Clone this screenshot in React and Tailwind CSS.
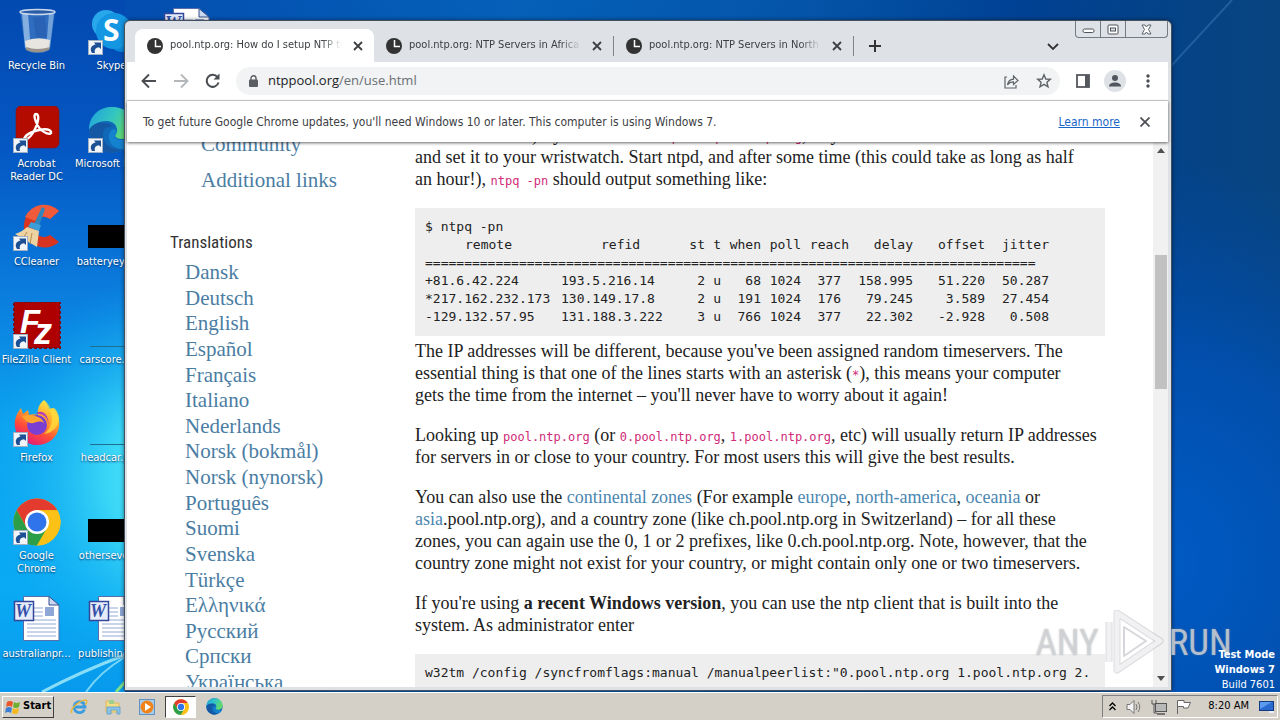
import React from "react";

const ui = "font-['DejaVu_Sans_Condensed','DejaVu_Sans',sans-serif]";

function Wallpaper() {
  return (
    <svg className="absolute inset-0 h-full w-full" viewBox="0 0 1280 692" preserveAspectRatio="none" aria-hidden="true">
      <defs>
        <linearGradient id="sky" x1="0" x2="1" y1="0" y2="0">
          <stop offset="0" stopColor="#0348ae" />
          <stop offset="0.4" stopColor="#0560b8" />
          <stop offset="0.62" stopColor="#0455aa" />
          <stop offset="0.8" stopColor="#004193" />
          <stop offset="1" stopColor="#08447f" />
        </linearGradient>
        <linearGradient id="left" x1="0" x2="0" y1="0" y2="1">
          <stop offset="0" stopColor="#0349b0" />
          <stop offset="0.22" stopColor="#0558c4" />
          <stop offset="0.42" stopColor="#0a7cdd" />
          <stop offset="0.62" stopColor="#0ca4f0" />
          <stop offset="0.85" stopColor="#0aaaf4" />
          <stop offset="1" stopColor="#079aec" />
        </linearGradient>
        <radialGradient id="glow" gradientUnits="userSpaceOnUse" cx="190" cy="480" r="210">
          <stop offset="0" stopColor="#5ff0ff" />
          <stop offset="0.4" stopColor="#41def8" stopOpacity="0.85" />
          <stop offset="1" stopColor="#0aa4f0" stopOpacity="0" />
        </radialGradient>
        <radialGradient id="low" gradientUnits="userSpaceOnUse" cx="1150" cy="560" r="400">
          <stop offset="0" stopColor="#005cc6" />
          <stop offset="0.5" stopColor="#0052b8" stopOpacity="0.8" />
          <stop offset="1" stopColor="#004ba8" stopOpacity="0" />
        </radialGradient>
      </defs>
      <rect width="1280" height="692" fill="url(#sky)" />
      <rect y="24" x="1100" width="180" height="668" fill="url(#low)" />
      <rect width="125" height="692" fill="url(#left)" />
      <rect width="125" height="692" fill="url(#glow)" />
      <path d="M1160 78 L1232 0" stroke="#3b78b4" strokeWidth="2" opacity="0.5" />
      <path d="M42 692 Q80 672 125 655" stroke="#a9eefa" strokeWidth="3" fill="none" opacity="0.8" />
      <path d="M86 692 Q100 672 125 657" stroke="#a9eefa" strokeWidth="2" fill="none" opacity="0.7" />
      <path d="M116 692 L125 682" stroke="#7fe08a" strokeWidth="3" />
    </svg>
  );
}

function Shortcut() {
  return (
    <g>
      <rect x="0.500" y="32.500" width="14" height="14" fill="#f1f5fa" stroke="#9fb0c4" />
      <path d="M4 45C1.500 41 3 37.500 7.500 36.500L6 34.500H13V41L11 39.300C8 39.500 6 41.500 7 45Z" fill="#1c4f93" />
    </g>
  );
}

function Art({ children, link = true }) {
  return (
    <svg width="48" height="48" viewBox="0 0 48 48" className="block" aria-hidden="true">
      {children}
      {link && <Shortcut />}
    </svg>
  );
}

function RecycleBin() {
  return (
    <Art link={false}>
      <path d="M7 3 L42 3 L37 40 Q36 45 25 45 Q14 45 12 40 Z" fill="#3f78c4" opacity="0.75" />
      <path d="M9 5 L15 5 L18 43 L12 40 Z" fill="#a7cdf0" opacity="0.7" />
      <path d="M36 5 L41 5 L37 40 L33 42 Z" fill="#8db9e6" opacity="0.7" />
      <path d="M20 10 L32 8 L34 28 L24 34 Z" fill="#2457a8" opacity="0.5" />
      <path d="M12 33 Q24 28 37 32 L36 41 Q25 46 13 41 Z" fill="#e8e4df" />
      <path d="M13 39 Q24 43 37 39 L36 42 Q24 47 13 42 Z" fill="#9a948c" />
      <ellipse cx="24.500" cy="4" rx="17.500" ry="2.500" fill="#2a5ca8" stroke="#c8d8ea" strokeWidth="1.500" />
    </Art>
  );
}

function Acrobat() {
  return (
    <Art>
      <rect x="3" y="0" width="43" height="42" rx="5" fill="#b30b00" stroke="#7c1a1a" strokeWidth="0.600" />
      <path
        d="M12 31c3-4 9-6 14-7 5-1 11-1 12 2 1 4-9 1-13-6-3-5-5-12-2-12 4 0 2 10-1 15-2 4-6 10-9 10-2 0-2-1-1-2z"
        fill="none" stroke="#fff" strokeWidth="2.400"
      />
    </Art>
  );
}

function CCleaner() {
  return (
    <Art>
      <path d="M46 7 A21 21 0 1 0 46 38 L37 31 A10 10 0 1 1 37 15 Z" fill="#d9341f" />
      <path d="M46 7 A21 21 0 0 0 12 13 L22 17 A10 10 0 0 1 37 15 Z" fill="#ef5a3a" />
      <path d="M29 3 L32 5 L26 22 L21 20 Z" fill="#2f86bd" />
      <path d="M18 18 L28 21 L26 27 L15 23 Z" fill="#3b9ed6" />
      <path d="M14 23 L26 27 L24 43 L2 30 Q9 28 14 23 Z" fill="#edd2a2" />
      <path d="M14 28 L10 34 M19 29 L17 40" stroke="#b9904e" />
    </Art>
  );
}

function FileZilla() {
  return (
    <Art>
      <rect x="1" y="0" width="46" height="46" fill="#ae0000" stroke="#7a0c14" strokeWidth="2" strokeDasharray="3 2" />
      <text x="7" y="31" fontSize="33" fontWeight="700" fontStyle="italic" fontFamily="Liberation Sans, sans-serif" fill="#fff">F</text>
      <text x="21" y="42" fontSize="36" fontWeight="700" fontStyle="italic" fontFamily="Liberation Sans, sans-serif" fill="#fff">z</text>
    </Art>
  );
}

function Firefox() {
  return (
    <Art>
      <defs>
        <linearGradient id="ff" x1="0.8" y1="0" x2="0.3" y2="1">
          <stop offset="0" stopColor="#fff14a" />
          <stop offset="0.4" stopColor="#ffa02a" />
          <stop offset="0.7" stopColor="#ff4a3a" />
          <stop offset="1" stopColor="#e0157f" />
        </linearGradient>
      </defs>
      <path d="M31 0c3 3 4 6 5 9l4-1c5 6 7 12 6 19-2 11-11 18-22 18S3 37 2 27c-1-8 2-14 6-19l2 6 5-4 1 5c3-1 6-1 9 0-1-6 1-11 6-15z" fill="url(#ff)" />
      <circle cx="24" cy="25" r="10" fill="#7a3fd2" />
      <path d="M9 16c5-2 12-1 16 1 5 2 6 6 6 6-5-4-9 1-14 0-4-1-6-4-8-7z" fill="#ffa52e" />
      <path d="M23 14c7-1 12 4 12 10 1-1 0-6-2-9-3-4-8-4-10-1z" fill="#b03ac0" />
      <path d="M31 0c3 3 4 6 5 9 6 9 2 20-5 25 9-1 15-8 15-16-1-7-4-10-6-10l-2 3C37 6 34 2 31 0z" fill="#ffdc3c" opacity="0.8" />
    </Art>
  );
}

function ChromeMark() {
  return (
    <g>
      <circle cx="24" cy="24" r="23.500" fill="#fbc116" />
      <path d="M3.700 12.200 A23.500 23.500 0 0 1 44.300 12.200 L24 12.200 L14 30 Z" fill="#e33b2e" />
      <path d="M3.700 12.200 A23.500 23.500 0 0 0 24 47.500 L34.200 30 L24 34 L13.800 30 Z" fill="#2b9e47" />
      <path d="M44.300 12.200 A23.500 23.500 0 0 1 24 47.500 L34.200 30 L24 12.200 Z" fill="#fbc116" />
      <circle cx="24" cy="24" r="12" fill="#fff" />
      <circle cx="24" cy="24" r="9.500" fill="#2f74ea" />
    </g>
  );
}

function EdgeMark({ id }) {
  return (
    <g>
      <defs>
        <linearGradient id={id} x1="0" x2="1" y1="0" y2="0.4">
          <stop offset="0" stopColor="#1f9fe0" />
          <stop offset="0.55" stopColor="#34c6c0" />
          <stop offset="1" stopColor="#63d96a" />
        </linearGradient>
      </defs>
      <circle cx="24" cy="24" r="23" fill="#1068b8" />
      <path d="M1 24 C1 9 12 1 24 1 C38 1 47 11 47 21 C47 29 41 33 34 33 C28 33 26 30 28 28 C31 24 28 15 19 15 C9 15 3 20 1 24 Z" fill={`url(#${id})`} />
      <path d="M15 28 C15 39 24 45 35 43 C29 47 22 48 15 45 C5 41 1 32 1 24 C4 18 11 16 17 17 C21 17 24 19 25 21 C19 20 15 23 15 28 Z" fill="#1458a4" />
      <path d="M28 28 C25 31 28 34 34 34 C39 34 43 33 45 31 C45 37 40 42 35 43 C25 43 20 36 21 29 C22 25 24 23 26 23 C29 24 29 26 28 28 Z" fill="#1582cf" />
    </g>
  );
}

function Skype() {
  return (
    <Art>
      <circle cx="18" cy="16" r="14" fill="#28a8ea" />
      <circle cx="34" cy="31" r="13" fill="#0a86d8" />
      <circle cx="26" cy="23" r="18" fill="#1496e2" />
      <text x="15" y="33" fontSize="30" fontWeight="700" fontFamily="Open Sans, sans-serif" fill="#fff">S</text>
    </Art>
  );
}

function WordDoc() {
  return (
    <Art link={false}>
      <path d="M10.500 .5 H36 L46 9 V44.500 H10.500 Z" fill="#fff" stroke="#5a6fa8" />
      <path d="M36 .5 V9 H46 Z" fill="#cbd8ef" stroke="#33508f" />
      <path d="M14 12H30M14 16H30M14 20H30M14 24H43M14 28H43M14 32H43M14 36H43M14 40H43" stroke="#93aad6" />
      <rect x="32" y="11" width="9" height="9" fill="#8ea7d6" />
      <rect x="1.500" y="5.500" width="19" height="19" fill="#e6ecfa" stroke="#33479a" strokeWidth="1.500" />
      <text x="2" y="21" fontSize="18" fontWeight="700" fontStyle="italic" fontFamily="Liberation Serif, serif" fill="#3450a8">W</text>
    </Art>
  );
}

function Thumb({ bar }) {
  return (
    <Art link={false}>
      {bar ? <rect x="0" y="21" width="48" height="23" fill="#000" /> : <rect x="2" y="44" width="46" height="1" fill="#1d6f92" />}
    </Art>
  );
}

function DesktopIcon({ label, children }) {
  return (
    <div className="flex h-[98px] w-[73px] flex-col items-center pt-2">
      {children}
      <span className={`mt-[3px] whitespace-pre text-center text-[11px] leading-[13px] text-white [text-shadow:0_1px_2px_#003060] ${ui}`}>{label}</span>
    </div>
  );
}

function Tab({ title, active }) {
  return (
    <div className={`flex h-[33px] w-[239px] shrink-0 items-center pl-3 pr-2 ${active ? "rounded-t-lg bg-white" : ""}`}>
      <svg width="16" height="16" viewBox="0 0 16 16" className="mr-[7px] shrink-0" aria-hidden="true">
        <circle cx="8" cy="8" r="8" fill="#333" />
        <path d="M8.500 2V8.500H14" stroke="#fff" strokeWidth="1.500" fill="none" />
      </svg>
      <span className="flex-1 overflow-hidden whitespace-nowrap text-[11px] text-[#3c4043] [mask-image:linear-gradient(to_right,#000_88%,transparent)]">{title}</span>
      <button aria-label="Close tab" className="ml-2 flex size-4 items-center justify-center">
        <svg width="10" height="10" viewBox="0 0 10 10"><path d="M1 1L9 9M9 1L1 9" stroke="#3c4043" strokeWidth="1.800" /></svg>
      </button>
    </div>
  );
}

const Sep = () => <div className="h-5 w-px shrink-0 bg-[#808489]" />;

function TabStrip() {
  return (
    <div className="flex h-[41px] items-end pl-2">
      <Tab active title="pool.ntp.org: How do I setup NTP to use" />
      <Tab title="pool.ntp.org: NTP Servers in Africa, africa" />
      <div className="flex h-[33px] items-center"><Sep /></div>
      <Tab title="pool.ntp.org: NTP Servers in North America" />
      <div className="flex h-[33px] flex-1 items-center">
        <Sep />
        <button aria-label="New tab" className="ml-[15px]">
          <svg width="12" height="12" viewBox="0 0 12 12"><path d="M6 0V12M0 6H12" stroke="#333" strokeWidth="2" /></svg>
        </button>
      </div>
      <div className="flex h-[41px] items-start">
        <button aria-label="Search tabs" className="mr-4 mt-[22px]">
          <svg width="12" height="8" viewBox="0 0 12 8"><path d="M1 1L6 6L11 1" stroke="#333" strokeWidth="1.800" fill="none" /></svg>
        </button>
        <div className="flex h-[17px] rounded-b border border-t-0 border-[#747a82]">
          <button aria-label="Minimize" className="flex w-[25px] items-center justify-center border-r border-[#747a82]">
            <svg width="13" height="7" viewBox="0 0 13 7"><rect x="1" y="3" width="11" height="3.500" rx="1.500" fill="#fff" stroke="#4e535b" /></svg>
          </button>
          <button aria-label="Maximize" className="flex w-[25px] items-center justify-center border-r border-[#747a82]">
            <svg width="13" height="11" viewBox="0 0 13 11"><rect x="1" y="1" width="10" height="9" rx="1" fill="#fff" stroke="#4e535b" /><rect x="3.500" y="4" width="5" height="3" fill="#dee1e6" stroke="#4e535b" /></svg>
          </button>
          <button aria-label="Close" className="flex w-[41px] items-center justify-center">
            <svg width="13" height="11" viewBox="0 0 13 11"><path d="M2 1H5L6.500 3L8 1H11L8.500 5.500L11 10H8L6.500 8L5 10H2L4.500 5.500Z" fill="#fff" stroke="#5d626a" /></svg>
          </button>
        </div>
      </div>
    </div>
  );
}

function Toolbar() {
  return (
    <div className="flex h-[39px] items-center border-b border-[#d5d7da] bg-white pl-[14px] pr-[18px]">
      <button aria-label="Back"><svg width="16" height="16" viewBox="0 0 16 16"><path d="M15 8H2M8 1.500L1.500 8L8 14.500" stroke="#4a4d51" strokeWidth="1.900" fill="none" /></svg></button>
      <button aria-label="Forward" className="ml-4"><svg width="16" height="16" viewBox="0 0 16 16"><path d="M1 8H14M8 1.500L14.500 8L8 14.500" stroke="#b5b8bb" strokeWidth="1.900" fill="none" /></svg></button>
      <button aria-label="Reload" className="ml-4"><svg width="16" height="16" viewBox="0 0 16 16"><path d="M13.500 9.500A6 6 0 1 1 12.500 4.200" stroke="#4a4d51" strokeWidth="2" fill="none" /><path d="M14.500 0.500V6.500H8.500Z" fill="#4a4d51" /></svg></button>
      <div className="ml-[15px] flex h-7 flex-1 items-center rounded-full bg-[#f1f3f4] pl-[13px] pr-2">
        <svg width="9" height="12" viewBox="0 0 9 12" className="mr-[10px] shrink-0"><rect y="4.500" width="9" height="7.500" rx="1" fill="#5b5e62" /><path d="M2 5V3.200a2.500 2.500 0 0 1 5 0V5" stroke="#5b5e62" strokeWidth="1.400" fill="none" /></svg>
        <div className="flex-1 whitespace-nowrap font-['Open_Sans',sans-serif] text-[13px] text-[#202124]">ntppool.org<span className="text-[#6a6e73]">/en/use.html</span></div>
        <button aria-label="Share" className="mr-[17px]">
          <svg width="15" height="15" viewBox="0 0 15 15"><path d="M3 3H1V14H12V11M3.500 11C4 7.500 6 5.500 9.500 5.200V2L14 6.500L9.500 10.500V7.800C7 7.800 5 8.500 3.500 11Z" stroke="#5f6368" strokeWidth="1.200" fill="none" /></svg>
        </button>
        <button aria-label="Bookmark">
          <svg width="16" height="16" viewBox="0 0 16 16"><path d="M8 1.800L9.800 6L14.300 6.400L10.900 9.300L12 13.800L8 11.400L4 13.800L5.100 9.300L1.700 6.400L6.200 6Z" stroke="#5f6368" strokeWidth="1.400" fill="none" /></svg>
        </button>
      </div>
      <button aria-label="Side panel" className="ml-4"><svg width="14" height="14" viewBox="0 0 14 14"><rect x="1" y="1" width="12" height="12" fill="none" stroke="#54585c" strokeWidth="1.800" /><rect x="9" y="1" width="4" height="12" fill="#54585c" /></svg></button>
      <button aria-label="Profile" className="ml-[14px] flex size-[22px] items-center justify-center rounded-full bg-[#dee1e6]"><svg width="14" height="14" viewBox="0 0 14 14"><circle cx="7" cy="4" r="3" fill="#51555d" /><path d="M1 12.500C1 9.500 4 8.500 7 8.500S13 9.500 13 12.500Z" fill="#51555d" /></svg></button>
      <button aria-label="Menu" className="ml-5"><svg width="4" height="14" viewBox="0 0 4 14" fill="#4a4d51"><circle cx="2" cy="2" r="1.700" /><circle cx="2" cy="7" r="1.700" /><circle cx="2" cy="12" r="1.700" /></svg></button>
    </div>
  );
}

function InfoBar() {
  return (
    <div className="relative flex h-[41px] items-center bg-white pl-4 pr-[18px] text-[12px] text-[#3c4043] shadow-[0_1px_3px_rgba(0,0,0,0.6)]">
      <span className="flex-1 whitespace-nowrap">To get future Google Chrome updates, you'll need Windows 10 or later. This computer is using Windows 7.</span>
      <a href="#learn" className="mr-5 whitespace-nowrap text-[#1a66c8] underline">Learn more</a>
      <button aria-label="Dismiss"><svg width="10" height="10" viewBox="0 0 10 10"><path d="M0.500 0.500L9.500 9.500M9.500 0.500L0.500 9.500" stroke="#4a4d51" strokeWidth="1.700" /></svg></button>
    </div>
  );
}

const languages = [
  "Dansk", "Deutsch", "English", "Español", "Français", "Italiano", "Nederlands", "Norsk (bokmål)", "Norsk (nynorsk)",
  "Português", "Suomi", "Svenska", "Türkçe", "Ελληνικά", "Русский", "Српски", "Українська",
];

function Sidebar() {
  return (
    <nav className="w-[288px] shrink-0 whitespace-nowrap pl-[43px] text-[21px] leading-5 text-[#4a7da3]">
      <div className="-mt-2 flex flex-col gap-4 pl-[31px]">
        <a href="#community">Community</a>
        <a href="#links">Additional links</a>
      </div>
      <h3 className="mt-[42px] font-['Roboto_Condensed',sans-serif] text-[17px] leading-5 text-[#333]">Translations</h3>
      <ul className="mt-[10px] flex h-[430px] flex-col justify-between pl-[15px]">
        {languages.map((l) => (
          <li key={l}><a href="#lang">{l}</a></li>
        ))}
      </ul>
    </nav>
  );
}

const peers = [
  ["+81.6.42.224", "193.5.216.14", "2", "u", "68", "1024", "377", "158.995", "51.220", "50.287"],
  ["*217.162.232.173", "130.149.17.8", "2", "u", "191", "1024", "176", "79.245", "3.589", "27.454"],
  ["-129.132.57.95", "131.188.3.222", "3", "u", "766", "1024", "377", "22.302", "-2.928", "0.508"],
];
const cols = ["w-[136px]", "w-[104px]", "w-10", "w-4", "w-10", "w-10", "w-12", "w-16", "w-[72px]", "w-16"];
const heads = ["remote", "refid", "st", "t", "when", "poll", "reach", "delay", "offset", "jitter"];

const Code = ({ children }) => (
  <code className="font-['DejaVu_Sans_Mono','Liberation_Mono',monospace] text-[12px] leading-none text-[#d02a78]">{children}</code>
);
const Link = ({ children }) => <a href="#zone" className="text-[#4a86b0]">{children}</a>;

function Article() {
  return (
    <article className="-mt-[18px] mr-12 min-w-0 flex-1 text-[18px] leading-[22px] whitespace-nowrap text-[#222]">
      <p>
        of the 'true' time) - you could use <Code>ntpdate pool.ntp.org</Code>, or you could use the date command<br />
        and set it to your wristwatch. Start ntpd, and after some time (this could take as long as half<br />
        an hour!), <Code>ntpq -pn</Code> should output something like:
      </p>
      <div className="mt-[18px] overflow-hidden bg-[#eee] p-[10px] font-['DejaVu_Sans_Mono','Liberation_Mono',monospace] text-[13px] leading-[18px]">
        <div>$ ntpq -pn</div>
        <table className="w-[624px] table-fixed border-collapse text-right">
          <colgroup>{cols.map((c, i) => <col key={i} className={c} />)}</colgroup>
          <thead>
            <tr>
              {heads.map((h, i) => (
                <th key={h} scope="col" className={`p-0 font-normal ${i < 2 ? "pl-10 text-left" : ""}`}>{h}</th>
              ))}
            </tr>
          </thead>
          <tbody>
            <tr><td colSpan={10} className="p-0 text-left">{"=".repeat(78)}</td></tr>
            {peers.map((row) => (
              <tr key={row[0]}>
                {row.map((v, i) => (
                  <td key={i} className={`p-0 ${i < 2 ? "text-left" : ""} ${i === 6 ? "pr-2" : ""}`}>{v}</td>
                ))}
              </tr>
            ))}
          </tbody>
        </table>
      </div>
      <p className="mt-1">
        The IP addresses will be different, because you've been assigned random timeservers. The<br />
        essential thing is that one of the lines starts with an asterisk (<Code>*</Code>), this means your computer<br />
        gets the time from the internet – you'll never have to worry about it again!
      </p>
      <p className="mt-[18px]">
        Looking up <Code>pool.ntp.org</Code> (or <Code>0.pool.ntp.org</Code>, <Code>1.pool.ntp.org</Code>, etc) will usually return IP addresses<br />
        for servers in or close to your country. For most users this will give the best results.
      </p>
      <p className="mt-[18px]">
        You can also use the <Link>continental zones</Link> (For example <Link>europe</Link>, <Link>north-america</Link>, <Link>oceania</Link> or<br />
        <Link>asia</Link>.pool.ntp.org), and a country zone (like ch.pool.ntp.org in Switzerland) – for all these<br />
        zones, you can again use the 0, 1 or 2 prefixes, like 0.ch.pool.ntp.org. Note, however, that the<br />
        country zone might not exist for your country, or might contain only one or two timeservers.
      </p>
      <p className="mt-[18px]">
        If you're using <b>a recent Windows version</b>, you can use the ntp client that is built into the<br />
        system. As administrator enter
      </p>
      <pre className="mt-[18px] overflow-hidden bg-[#eee] p-[10px] font-['DejaVu_Sans_Mono','Liberation_Mono',monospace] text-[13px] leading-[18px]">
        {'w32tm /config /syncfromflags:manual /manualpeerlist:"0.pool.ntp.org 1.pool.ntp.org 2.'}
      </pre>
    </article>
  );
}

function Scrollbar() {
  return (
    <div className="flex w-[15px] shrink-0 flex-col items-center bg-[#f1f1f1] py-[6px]">
      <svg width="8" height="5" viewBox="0 0 8 5"><path d="M0 5L4 0L8 5Z" fill="#505050" /></svg>
      <div className="flex w-full flex-1 flex-col items-center pt-[102px]"><div className="h-[134px] w-3 bg-[#c1c1c1]" /></div>
      <svg width="8" height="5" viewBox="0 0 8 5"><path d="M0 0L4 5L8 0Z" fill="#505050" /></svg>
    </div>
  );
}

function BrowserWindow() {
  return (
    <main className="absolute bottom-px left-[124px] right-[108px] top-5 flex flex-col overflow-hidden rounded-t-md border border-[#44505e] bg-[#dee1e6] pb-[3px] pl-[2px] pr-[3px] shadow-[0_0_4px_rgba(0,0,0,0.5)]">
      <TabStrip />
      <Toolbar />
      <InfoBar />
      <div className="flex min-h-0 flex-1 overflow-hidden bg-white font-['Liberation_Serif',serif]">
        <Sidebar />
        <Article />
        <Scrollbar />
      </div>
    </main>
  );
}

function Watermark() {
  return (
    <div className="absolute bottom-[18px] right-12 flex items-center gap-1 font-['Roboto_Condensed',sans-serif] text-[37px] leading-none text-[#d2d4d8]/80 [text-shadow:0_0_2px_rgba(150,150,150,0.6)]" aria-hidden="true">
      <span>ANY</span>
      <svg width="62" height="64" viewBox="0 0 62 64" fill="none" strokeLinejoin="round">
        <path d="M6 12V52M14 3L57 31L14 60Z" stroke="#a9abb0" strokeWidth="7" opacity="0.4" />
        <path d="M6 12V52M14 3L57 31L14 60Z" stroke="#f4f5f7" strokeWidth="5" opacity="0.85" />
        <path d="M21 17L43 31L21 46Z" stroke="#c4c6ca" strokeWidth="2" opacity="0.7" />
      </svg>
      <span>RUN</span>
    </div>
  );
}

function Taskbar() {
  return (
    <footer className="flex h-7 shrink-0 items-center border-t border-white bg-[#d4d0c8] pl-[2px] pr-[2px] shadow-[0_-1px_0_#d4d0c8]">
      <button className="flex h-[22px] w-[52px] items-center gap-[2px] border border-b-[#404040] border-l-white border-r-[#404040] border-t-white pl-[2px] text-[11px] font-bold text-black">
        <svg width="16" height="16" viewBox="0 0 16 16">
          <path d="M2 3Q5 1 8 3L7 8Q4 6 1 8Z" fill="#e8562a" />
          <path d="M9 3Q12 5 15 3L14 8Q11 10 8 8Z" fill="#6fae2e" />
          <path d="M1 9Q4 7 7 9L6 14Q3 12 0 14Z" fill="#3d7fd6" />
          <path d="M8 9Q11 11 14 9L13 14Q10 16 7 14Z" fill="#f5b81e" />
        </svg>
        Start
      </button>
      <button aria-label="Internet Explorer" className="ml-4">
        <svg width="18" height="18" viewBox="0 0 18 18" fill="none"><path d="M14.500 11.500A5.500 5.500 0 1 1 15 9H5" stroke="#3a9be0" strokeWidth="2.800" /><path d="M2 15C-1 12 8 3 15 2C18 2 17 5 15 7" stroke="#e6b93c" strokeWidth="1.500" /></svg>
      </button>
      <button aria-label="Explorer" className="ml-4">
        <svg width="18" height="18" viewBox="0 0 18 18"><path d="M2 3H7L8 5H15V14H2Z" fill="#f4dd86" stroke="#d8b85a" /><path d="M5 2H10V6H5Z" fill="#9fcf8c" /><path d="M3 9H16V16H13V12H7V16H3Z" fill="#8cc4e8" stroke="#5b9cc8" strokeWidth="0.800" /></svg>
      </button>
      <button aria-label="Media Player" className="ml-4">
        <svg width="18" height="18" viewBox="0 0 18 18"><rect x="1.500" y="1.500" width="15" height="15" fill="#a9cbea" stroke="#5f93c4" /><circle cx="9" cy="9" r="6.500" fill="#f08418" /><path d="M7 5L13 9L7 13Z" fill="#fff" /></svg>
      </button>
      <button aria-label="Chrome" className="ml-[9px] flex h-[22px] w-[31px] items-center justify-center border border-b-white border-l-[#404040] border-r-white border-t-[#404040] bg-white">
        <svg width="16" height="16" viewBox="0 0 48 48"><ChromeMark /></svg>
      </button>
      <button aria-label="Edge" className="ml-[10px]">
        <svg width="17" height="17" viewBox="0 0 48 48"><EdgeMark id="edgeTask" /></svg>
      </button>
      <div className="ml-auto flex h-[23px] items-center border border-b-white border-l-[#808080] border-r-white border-t-[#808080] pl-[6px] pr-[2px] text-[11px] text-black">
        <svg width="7" height="9" viewBox="0 0 7 9" fill="none" stroke="#000" strokeWidth="1.300"><path d="M0.500 4L3.500 1L6.500 4M0.500 8L3.500 5L6.500 8" /></svg>
        <svg className="ml-[10px]" width="17" height="16" viewBox="0 0 17 16" fill="none" stroke="#777"><path d="M1 5.500H4L8 1.500V14.500L4 10.500H1Z" fill="#f4f4f4" /><path d="M10 5Q12 8 10 11M12 3Q15.500 8 12 13" /></svg>
        <svg className="ml-2" width="16" height="16" viewBox="0 0 16 16"><rect x="4.500" y="4.500" width="11" height="8" fill="#b8b8b8" stroke="#555" /><path d="M6 15H14" stroke="#555" strokeWidth="1.500" /><path d="M1 1V5H5V1M3 5V14H6" stroke="#555" fill="none" /></svg>
        <svg className="ml-2" width="17" height="16" viewBox="0 0 17 16"><path d="M2.500 15V1.500H9V3.500H15.500L13 9H8.500V7.500H2.500" fill="#fff" stroke="#666" /></svg>
        <span className="ml-4 whitespace-nowrap">8:20 AM</span>
        <svg className="ml-[10px]" width="16" height="14" viewBox="0 0 16 14"><rect x="0.500" y="1.500" width="14" height="9" fill="#2a6ad0" stroke="#123a80" /><path d="M1 2L13 2L1 9Z" fill="#5b9bf0" /><path d="M10 12H15" stroke="#e8f0ff" strokeWidth="2" /></svg>
      </div>
    </footer>
  );
}

export default function App() {
  return (
    <div className={`flex h-screen flex-col overflow-hidden ${ui}`}>
      <div className="relative flex-1 overflow-hidden">
        <Wallpaper />
        <div className="relative flex gap-[2px]">
          <div>
            <DesktopIcon label="Recycle Bin"><RecycleBin /></DesktopIcon>
            <DesktopIcon label={"Acrobat\nReader DC"}><Acrobat /></DesktopIcon>
            <DesktopIcon label="CCleaner"><CCleaner /></DesktopIcon>
            <DesktopIcon label="FileZilla Client"><FileZilla /></DesktopIcon>
            <DesktopIcon label="Firefox"><Firefox /></DesktopIcon>
            <DesktopIcon label={"Google\nChrome"}><Art><ChromeMark /></Art></DesktopIcon>
            <DesktopIcon label="australianpr..."><WordDoc /></DesktopIcon>
          </div>
          <div>
            <DesktopIcon label="Skype"><Skype /></DesktopIcon>
            <DesktopIcon label="Microsoft Edge"><Art><EdgeMark id="edgeDesk" /></Art></DesktopIcon>
            <DesktopIcon label="batteryeye.j..."><Thumb bar /></DesktopIcon>
            <DesktopIcon label="carscore.png"><Thumb /></DesktopIcon>
            <DesktopIcon label="headcar.png"><Thumb /></DesktopIcon>
            <DesktopIcon label="otherseven..."><Thumb bar /></DesktopIcon>
            <DesktopIcon label="publishingp..."><WordDoc /></DesktopIcon>
          </div>
          <div>
            <DesktopIcon label=""><WordDoc /></DesktopIcon>
          </div>
        </div>
        <BrowserWindow />
        <Watermark />
        <div className="absolute bottom-0 right-[5px] text-right text-[11px] leading-[15px] text-white">
          <b>Test Mode</b><br /><b>Windows 7</b><br />Build 7601
        </div>
      </div>
      <Taskbar />
    </div>
  );
}
